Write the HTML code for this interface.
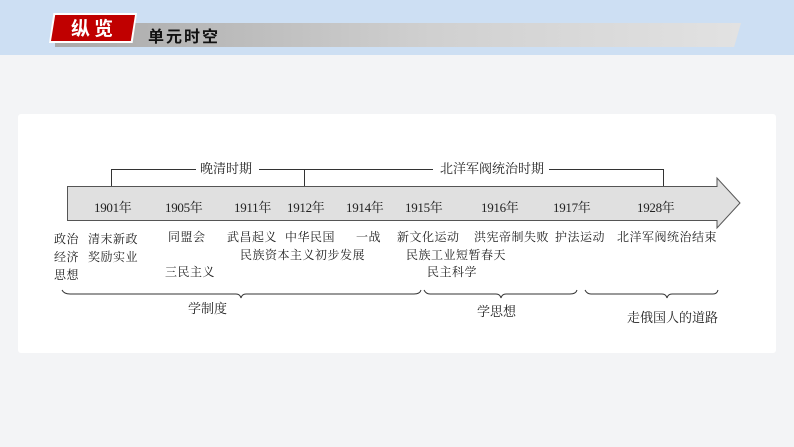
<!DOCTYPE html>
<html><head><meta charset="utf-8"><style>
body{margin:0;width:794px;height:447px;overflow:hidden;background:#f3f4f6;position:relative;font-family:"Liberation Serif","Noto Serif CJK SC",serif;}
.t{position:absolute;font-size:12px;color:#222;white-space:nowrap;line-height:14px;letter-spacing:0.5px}
.h{letter-spacing:0}
.y{position:absolute;font-size:13px;color:#222;top:197px;white-space:nowrap;letter-spacing:-0.3px}
</style></head><body>
<div style="position:absolute;left:0;top:0;width:794px;height:55px;background:#cddff3"></div>
<div style="position:absolute;left:55px;top:23px;width:686px;height:24px;background:linear-gradient(90deg,#a9a9a9,#d0d0d0 55%,#e2e2e2);clip-path:polygon(0 0,100% 0,99% 100%,0 100%)"></div>
<div style="position:absolute;left:49px;top:13px;width:88px;height:30px;background:#fff;clip-path:polygon(5% 0,100% 0,95% 100%,0 100%)"></div>
<div style="position:absolute;left:51px;top:15px;width:84px;height:26px;background:#c00000;clip-path:polygon(5% 0,100% 0,95% 100%,0 100%);color:#fff;font:bold 19px 'Noto Sans CJK SC',sans-serif;line-height:26px;text-indent:20px;letter-spacing:4px">纵览</div>
<div style="position:absolute;left:148px;top:23px;font:bold 16px 'Noto Sans CJK SC',sans-serif;color:#111;letter-spacing:2px">单元时空</div>
<div style="position:absolute;left:18px;top:114px;width:758px;height:239px;background:#fff;border-radius:3px"></div>
<svg style="position:absolute;left:0;top:0" width="794" height="447">
<polygon points="67.5,186.5 717,186.5 717,178 740,203 717,228 717,220.5 67.5,220.5" fill="#e0e0e0" stroke="#555" stroke-width="1"/>
<g stroke="#333" fill="none" stroke-width="1">
<path d="M111.5,186 V169.5 H196 M259,169.5 H433 M549,169.5 H663.5 V186 M304.5,169.5 V186"/>
<path d="M62,290 q2,4 8,4 H236 q4,0 5,4 q1,-4 5,-4 H414 q6,0 7,-4"/>
<path d="M424,290 q2,4 6,4 H496 q4,0 5,4 q1,-4 5,-4 H570 q6,0 7,-4"/>
<path d="M585,290 q2,4 6,4 H662 q4,0 5,4 q1,-4 5,-4 H713 q4,0 5,-4"/>
</g></svg>
<div class="t h" style="left:200px;top:162px;font-size:13px">晚清时期</div>
<div class="t h" style="left:440px;top:162px;font-size:13px">北洋军阀统治时期</div>
<div class="y" style="left:94px">1901年</div>
<div class="y" style="left:165px">1905年</div>
<div class="y" style="left:234px">1911年</div>
<div class="y" style="left:287px">1912年</div>
<div class="y" style="left:346px">1914年</div>
<div class="y" style="left:405px">1915年</div>
<div class="y" style="left:481px">1916年</div>
<div class="y" style="left:553px">1917年</div>
<div class="y" style="left:637px">1928年</div>
<div class="t" style="left:54px;top:230px;line-height:18px">政治<br>经济<br>思想</div>
<div class="t" style="left:88px;top:230px;line-height:18px">清末新政<br>奖励实业</div>
<div class="t" style="left:168px;top:230px">同盟会</div>
<div class="t" style="left:165px;top:265px">三民主义</div>
<div class="t" style="left:227px;top:230px">武昌起义</div>
<div class="t" style="left:285px;top:230px">中华民国</div>
<div class="t" style="left:356px;top:230px">一战</div>
<div class="t" style="left:240px;top:248px">民族资本主义初步发展</div>
<div class="t" style="left:397px;top:230px">新文化运动</div>
<div class="t" style="left:406px;top:248px">民族工业短暂春天</div>
<div class="t" style="left:427px;top:265px">民主科学</div>
<div class="t" style="left:474px;top:230px">洪宪帝制失败</div>
<div class="t" style="left:555px;top:230px">护法运动</div>
<div class="t" style="left:617px;top:230px">北洋军阀统治结束</div>
<div class="t h" style="left:188px;top:302px;font-size:13px">学制度</div>
<div class="t h" style="left:477px;top:305px;font-size:13px">学思想</div>
<div class="t h" style="left:627px;top:311px;font-size:13px">走俄国人的道路</div>
</body></html>
